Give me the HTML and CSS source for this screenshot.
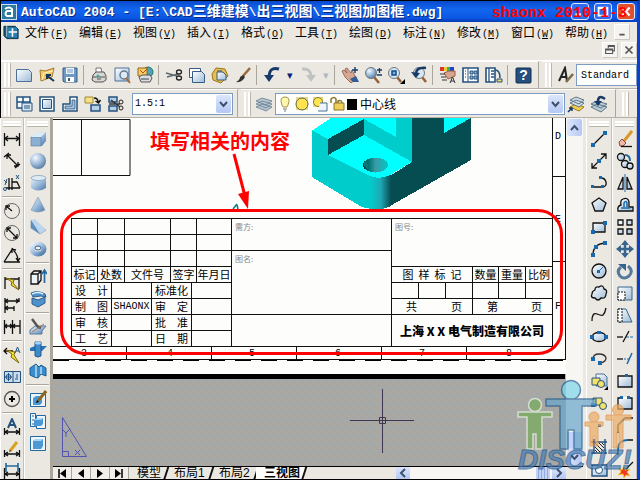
FILE: index.html
```html
<!DOCTYPE html>
<html lang="zh-CN">
<head>
<meta charset="utf-8">
<title>AutoCAD 2004</title>
<link rel="stylesheet" href="styles.css">
</head>
<body>
<svg class="defs" aria-hidden="true">
  <defs>
    <linearGradient id="pale" x1="0" y1="0" x2="1" y2="1"><stop offset="0" stop-color="#fff"/><stop offset="1" stop-color="#9dbbd8"/></linearGradient>
    <linearGradient id="steel" x1="0" y1="0" x2="1" y2="1"><stop offset="0" stop-color="#e6f1fa"/><stop offset=".5" stop-color="#9dbcdc"/><stop offset="1" stop-color="#4a78a8"/></linearGradient>
    <radialGradient id="ball" cx=".35" cy=".3" r=".8"><stop offset="0" stop-color="#f4faff"/><stop offset=".5" stop-color="#9dbad8"/><stop offset="1" stop-color="#4b7097"/></radialGradient>
    <linearGradient id="corner"><stop offset="0" stop-color="#00cccc"/><stop offset=".5" stop-color="#1fa9b4"/><stop offset="1" stop-color="#064c50"/></linearGradient>
    <linearGradient id="bore"><stop offset="0" stop-color="#033"/><stop offset=".25" stop-color="#077"/><stop offset=".5" stop-color="#3c9aa6"/><stop offset="1" stop-color="#00c8c8"/></linearGradient>
    <pattern id="grain" width="8" height="8" patternUnits="userSpaceOnUse"><rect width="8" height="8" fill="#a6a9a6"/><path fill="#b99a80" d="M1 1h1v1h-1zM5 3h1v1h-1zM2 6h1v1h-1z"/><path fill="#98a4b3" d="M3 3h1v1h-1zM7 6h1v1h-1zM6 0h1v1h-1z"/></pattern>
  </defs>
</svg>

<div class="window">
  <header class="titlebar">
    <svg class="app-logo" viewBox="0 0 16 16"><rect width="16" height="16" fill="#cfe3ee"/><rect x="1" y="1" width="14" height="14" fill="#2d7a9c"/><path d="M4 5q4-3 7 0v7H6q-3-2 0-5h5" fill="none" stroke="#fff" stroke-width="2"/></svg>
    <h1 class="caption"><span class="mono">AutoCAD 2004 - [E:\CAD</span>三维建模<span class="mono">\</span>出三视图<span class="mono">\</span>三视图加图框<span class="mono">.dwg]</span></h1>
    <div class="sys">
      <button aria-label="最小化"><svg viewBox="0 0 18 17"><path d="M4 12h6" stroke="#fff" stroke-width="3"/></svg></button>
      <button aria-label="还原"><svg viewBox="0 0 18 17"><path d="M4 4h10v9H4zM4 5h10" fill="none" stroke="#fff" stroke-width="2"/></svg></button>
      <button class="close" aria-label="关闭"><svg viewBox="0 0 18 17"><path d="M5 4l8 9M13 4l-8 9" stroke="#fff" stroke-width="2.4"/></svg></button>
    </div>
  </header>

  <div class="menubar">
    <nav class="menus">
      <svg class="doc-icon" viewBox="0 0 18 16"><path d="M1 2h12l3 3v10H4l-3-3z" fill="#175a7c" stroke="#082d44"/><path d="M4 1v12" stroke="#cde" /><rect x="5" y="3" width="10" height="11" fill="#2b7fae"/><path d="M10 4v9M6 8h9" stroke="#fff" stroke-width="1.6"/></svg>
      <button>文件<span class="key">(<u>F</u>)</span></button>
      <button>编辑<span class="key">(<u>E</u>)</span></button>
      <button>视图<span class="key">(<u>V</u>)</span></button>
      <button>插入<span class="key">(<u>I</u>)</span></button>
      <button>格式<span class="key">(<u>O</u>)</span></button>
      <button>工具<span class="key">(<u>T</u>)</span></button>
      <button>绘图<span class="key">(<u>D</u>)</span></button>
      <button>标注<span class="key">(<u>N</u>)</span></button>
      <button>修改<span class="key">(<u>M</u>)</span></button>
      <button>窗口<span class="key">(<u>W</u>)</span></button>
      <button class="last">帮助<span class="key">(<u>H</u>)</span></button>
      <span class="doc-sys min"><button aria-label="最小化文档"><svg viewBox="0 0 16 16"><path d="M5 11h6" stroke="#555" stroke-width="2"/></svg></button></span>
    </nav>
    <div class="doc-sys">
      <button aria-label="还原文档"><svg viewBox="0 0 16 16"><path d="M6 6V3h7v6h-2M3 7h8v5H3zM6 4h7M3 8h8" fill="none" stroke="#555" stroke-width="1.2"/></svg></button>
      <button aria-label="关闭文档"><svg viewBox="0 0 16 16"><path d="M4 4l8 8M12 4l-8 8" stroke="#555" stroke-width="2"/></svg></button>
    </div>
  </div>

  <div class="row">
    <div class="toolbar">
      <i class="grip"></i>
      <button class="tool" aria-label="新建"><svg viewBox="0 0 18 18"><path d="M1.500 3.500h12l3 3v9h-15z" fill="url(#pale)" stroke="#4c7199"/></svg></button>
      <button class="tool" aria-label="打开"><svg viewBox="0 0 18 18"><path d="M2 4l5 1 9-3-2 9-11 4z" fill="#f0c96c" stroke="#a87b28"/><path d="M4 14l2-7 9-2" fill="none" stroke="#fff2c0"/><path d="M8 9l8 6M9 13V9h4" stroke="#16365a" stroke-width="2" fill="none"/></svg></button>
      <button class="tool" aria-label="保存"><svg viewBox="0 0 18 18"><path d="M2 2h14v14H3l-1-1z" fill="#6f99c2" stroke="#365c86"/><path d="M5 2h8v6H5z" fill="#eef5fb"/><path d="M6 4h6M6 6h6" stroke="#6f99c2"/><path d="M5 11h8v5H5z" fill="#fff"/><path d="M7 12h2v3H7z" fill="#365c86"/></svg></button>
      <i class="sep"></i>
      <button class="tool" aria-label="打印"><svg viewBox="0 0 18 18"><path d="M6 7V2h5l1 5" fill="#fff" stroke="#777"/><path d="M3 9l3-3h8l2 4v4l-3 2H5l-3-2z" fill="#d6d6d2" stroke="#555"/><path d="M3 11h12M7 13h4" stroke="#555"/><circle cx="8" cy="10" r="1.500" fill="#4a9"/></svg></button>
      <button class="tool" aria-label="打印预览"><svg viewBox="0 0 18 18"><path d="M2 2h14v13H2z" fill="url(#pale)" stroke="#4c7199"/><circle cx="11" cy="9" r="4" fill="#dceaf5" stroke="#657b91" stroke-width="1.500"/><path d="M13 12l4 5" stroke="#a56a38" stroke-width="2"/></svg></button>
      <button class="tool" aria-label="发布"><svg viewBox="0 0 18 18"><circle cx="12" cy="6" r="5" fill="#4fa3b8" stroke="#276"/><path d="M2 2h9v8H2z" fill="#f5d05e" stroke="#94641b"/><path d="M4 4l3 3 4-4" stroke="#b43" fill="none"/><path d="M3 11l3-2h8l2 3-2 4H5z" fill="#ddd" stroke="#555"/><path d="M5 13h8" stroke="#345"/></svg></button>
      <i class="sep"></i>
      <button class="tool" aria-label="剪切"><svg viewBox="0 0 18 18"><path d="M1 7l11 3M2 11l11-3" stroke="#5d6a72" stroke-width="1.500"/><ellipse cx="14" cy="6" rx="2.500" ry="2" fill="none" stroke="#222" stroke-width="1.300"/><ellipse cx="14" cy="12" rx="2.500" ry="2" fill="none" stroke="#222" stroke-width="1.300"/></svg></button>
      <button class="tool" aria-label="复制"><svg viewBox="0 0 18 18"><path d="M1.500 2.500h11v9h-11z" fill="#fff" stroke="#365c86"/><path d="M4.500 5.500h9l3 3v8h-12z" fill="url(#pale)" stroke="#365c86"/></svg></button>
      <button class="tool" aria-label="粘贴"><svg viewBox="0 0 18 18"><path d="M5 2l9 1 3 7-7 7-8-3-1-6z" fill="#e8bf48" stroke="#9c7421"/><path d="M6 4h5v2H6z" fill="#888"/><path d="M6 6h6l3 3v5H6z" fill="url(#pale)" stroke="#365c86"/></svg></button>
      <button class="tool" aria-label="特性匹配"><svg viewBox="0 0 18 18"><path d="M16 2l-7 8" stroke="#9b6a3b" stroke-width="2.500"/><path d="M9 9l2 2q-3 6-9 5 4-2 4-5z" fill="#33332f"/></svg></button>
      <i class="sep"></i>
      <button class="tool" aria-label="放弃"><svg viewBox="0 0 18 18"><path d="M16 3Q6 0 6 12" fill="none" stroke="#173a68" stroke-width="3"/><path d="M1 9h10l-5 7z" fill="#173a68"/></svg></button>
      <button class="drop" aria-label="放弃列表">▾</button>
      <button class="tool" aria-label="重做"><svg viewBox="0 0 18 18"><path d="M3 3q9-1 9 8" fill="none" stroke="#bfc2c1" stroke-width="3"/><path d="M7 9h10l-5 7z" fill="#bfc2c1"/></svg></button>
      <button class="drop off" aria-label="重做列表">▾</button>
      <i class="sep"></i>
      <button class="tool" aria-label="平移"><svg viewBox="0 0 18 18"><path d="M1 5l2-1 3 3-2-4 2-1 4 5 1-3 3 6v4l-4 3-6-6z" fill="#d4a792" stroke="#8d5848" stroke-width=".8"/><path d="M9 13l6-3 3 6h-6z" fill="#315e92"/><path d="M14 1v6M11 4h6" stroke="#173a68" stroke-width="1.400"/></svg></button>
      <button class="tool" aria-label="实时缩放"><svg viewBox="0 0 18 18"><path d="M10 11l5 6" stroke="#965f35" stroke-width="2.500"/><circle cx="7" cy="7" r="5.500" fill="url(#ball)" stroke="#6c7880"/><path d="M13 4h5M15.500 2v5M13 9h5" stroke="#173a68" stroke-width="1.300"/></svg></button>
      <button class="tool" aria-label="窗口缩放"><svg viewBox="0 0 18 18"><path d="M10 11l4 5" stroke="#965f35" stroke-width="2.500"/><circle cx="7" cy="7" r="5.500" fill="#d8e6f0" stroke="#6c7880"/><path d="M5 5h4v4H5z" fill="#7fb0dc" stroke="#124e8c" stroke-width="1.500"/><path d="M18 13v5h-5z"/></svg></button>
      <button class="tool" aria-label="缩放上一个"><svg viewBox="0 0 18 18"><path d="M12 11l4 5" stroke="#965f35" stroke-width="2.500"/><circle cx="9" cy="7" r="5.500" fill="#d8e6f0" stroke="#6c7880"/><path d="M16 2Q7 1 6 7" fill="none" stroke="#173a68" stroke-width="2.500"/><path d="M1 6l9 1-4 5z" fill="#173a68"/></svg></button>
      <i class="sep"></i>
      <button class="tool" aria-label="特性"><svg viewBox="0 0 18 18"><path d="M1 1h4v4H1z" fill="#d33"/><path d="M5 1h3v4H5z" fill="#ec3"/><path d="M8 1h3v4H8z" fill="#3b4"/><path d="M11 1h4v4h-4z" fill="#24c"/><path d="M5 7l5-2h6v5l-7 3z" fill="#d9a590" stroke="#995b48"/><path d="M1 8h5M2 11h5M3 14h5" stroke="#333"/><path d="M11 17l2.500-6 2.500 6M12 15h3" stroke="#333" fill="none"/></svg></button>
      <button class="tool" aria-label="设计中心"><svg viewBox="0 0 18 18"><path d="M1 2h15v14H1z" fill="#fff" stroke="#24527f" stroke-width="1.600"/><path d="M6 2v14" stroke="#24527f"/><path d="M3 5h1M3 8h1M3 11h1M8 5h3v3H8zM12 5h3v3h-3zM8 10h3v3H8zM12 10h3v3h-3z" fill="#8db2d4" stroke="#24527f"/></svg></button>
      <button class="tool" aria-label="工具选项板"><svg viewBox="0 0 18 18"><path d="M1 2h9v14H1z" fill="#fff" stroke="#24527f" stroke-width="1.600"/><path d="M4 2v14M6 5h3M6 8h3M6 11h3" stroke="#24527f" stroke-width="1.300"/><path d="M10 4q5 0 5 8" fill="none" stroke="#24527f" stroke-width="1.600"/><path d="M12 13h5v3h-5z" fill="#f3d36a" stroke="#24527f"/></svg></button>
      <i class="sep"></i>
      <button class="tool" aria-label="帮助"><svg viewBox="0 0 18 18"><rect x="2" y="2" width="15" height="15" rx="1" fill="#244f80" stroke="#10304f"/><text x="9.500" y="14" text-anchor="middle" class="q">?</text></svg></button>
    </div>
    <div class="toolbar rest">
      <i class="grip"></i>
      <button class="tool" aria-label="文字样式"><svg viewBox="0 0 18 18"><path d="M3 15L9 2l2 13M5 11h6" fill="none" stroke="#222" stroke-width="2"/><path d="M17 8l-7 8" stroke="#7a6a45" stroke-width="2.500"/></svg></button>
      <input class="style-box" aria-label="文字样式名" value="Standard">
    </div>
  </div>

  <div class="row second">
    <div class="toolbar">
      <i class="grip"></i>
      <button class="tool" aria-label="显示视口对话框"><svg viewBox="0 0 18 18"><path d="M2 2h13v11H2zM8 2v11M2 7h13" fill="#f8fbfe" stroke="#24527f" stroke-width="1.500"/><path d="M7 8h10v8H7z" fill="#dbe8f4" stroke="#24527f"/><path d="M9 11h6M9 13h6" stroke="#24527f"/></svg></button>
      <button class="tool" aria-label="单个视口"><svg viewBox="0 0 18 18"><path d="M2 2h14v14H2z" fill="#fff" stroke="#24527f" stroke-width="1.500"/><path d="M4.500 4.500h9v9h-9z" fill="url(#pale)" stroke="#24527f"/></svg></button>
      <button class="tool" aria-label="多边形视口"><svg viewBox="0 0 18 18"><path d="M9 2h7v14H2V9h7z" fill="#fff" stroke="#24527f" stroke-width="1.500"/><path d="M11 5h3v9H4v-3h7z" fill="#9fbfdd" stroke="#24527f" stroke-width=".8"/></svg></button>
      <button class="tool" aria-label="将对象转换为视口"><svg viewBox="0 0 18 18"><path d="M1 2h8v6H1z" fill="#f4e08a" stroke="#a28a2d"/><path d="M10 3q4 0 4 4M11.500 6l3 2 2-3" fill="none" stroke="#111" stroke-width="1.500"/><path d="M7 10h9v6H7z" fill="#b7d0e6" stroke="#24527f" stroke-width="1.500"/></svg></button>
      <button class="tool" aria-label="剪裁现有视口"><svg viewBox="0 0 18 18"><path d="M2 2h8v5H2zM2 11h8v5H2z" fill="#b7d0e6" stroke="#24527f" stroke-width="1.500"/><path d="M2 9h11M4 5l9 7" stroke="#333" stroke-width="1.500"/><circle cx="14" cy="7" r="2" fill="none" stroke="#222"/><circle cx="14" cy="13" r="2" fill="none" stroke="#222"/></svg></button>
      <div class="combo scale">
        <select aria-label="视口比例"><option>1.5:1</option></select>
        <svg class="chev" viewBox="0 0 15 18"><path d="M4 7l3.500 4L11 7" fill="none" stroke="#40506f" stroke-width="2"/></svg>
      </div>
    </div>
    <div class="toolbar layers">
      <i class="grip"></i>
      <button class="tool" aria-label="图层特性管理器"><svg viewBox="0 0 18 18"><path d="M1 12l6-3 10 3-6 4zM1 9l6-3 10 3-6 4zM1 6l6-3 10 3-6 4z" fill="#b5c6d2" stroke="#667b8c" stroke-width=".8"/></svg></button>
      <div class="combo layer">
        <svg class="states" viewBox="0 0 80 18"><path d="M5 10q-3-8 3-8t3 8l-1 2H6z" fill="#fff7b0" stroke="#a2924a"/><path d="M6 14h4M7 16h2" stroke="#777"/><path d="M19 2h12v13H19z" fill="#e9d88c"/><circle cx="25" cy="9" r="6" fill="#ffe34f" stroke="#596b55"/><path d="M36 2h10v10H36z" fill="#ead875"/><circle cx="41" cy="7" r="4.500" fill="#ffe34f" stroke="#827b3f"/><path d="M43 8h7v8h-9" fill="#edf4fb" stroke="#4e7092"/><path d="M54 8V4q3-3 5 0v4M61 9V6q4-2 4 3" fill="none" stroke="#8b762a" stroke-width="1.500"/><path d="M57 8h10v7H57z" fill="#f0cf58" stroke="#8b762a"/><path d="M70 4h10v11H70z"/></svg>
        <select aria-label="图层"><option>中心线</option></select>
        <svg class="chev" viewBox="0 0 15 18"><path d="M4 7l3.500 4L11 7" fill="none" stroke="#40506f" stroke-width="2"/></svg>
      </div>
      <button class="tool" aria-label="将对象的图层置为当前"><svg viewBox="0 0 18 18"><path d="M3 12l6-3 8 3-5 4z" fill="#f1cf4c" stroke="#9b7d21"/><path d="M3 8l6-3 8 3-5 4zM3 5l6-3 8 3-5 4z" fill="#d3dfe6" stroke="#5c7584"/><path d="M1 17l4-4M2 13h3v3" stroke="#173a68" stroke-width="1.500" fill="none"/></svg></button>
      <button class="tool" aria-label="上一个图层"><svg viewBox="0 0 18 18"><path d="M1 12l6-3 10 3-6 5zM1 9l6-3 10 3-6 4z" fill="#bccdd8" stroke="#5c7584"/><path d="M15 4Q8-1 8 7" fill="none" stroke="#173a68" stroke-width="2.500"/><path d="M4 6h8l-4 5z" fill="#173a68"/></svg></button>
    </div>
    <div class="toolbar rest"><i class="grip"></i></div>
  </div>

  <main class="work">
    <div class="dock dims">
      <i class="grip"></i>
      <button class="tool" aria-label="线性标注"><svg viewBox="0 0 18 18"><path d="M1.500 3v13M16.500 3v13M2 8.500h14M5 6l-3 2.500L5 11M13 6l3 2.500-3 2.500" class="ln"/></svg></button>
      <button class="tool" aria-label="对齐标注"><svg viewBox="0 0 18 18"><path d="M1 5l5-4M12 16l5-4M4 3l11 11M4 7V3h4M15 10v4h-4" class="ln"/></svg></button>
      <button class="tool" aria-label="坐标标注"><svg viewBox="0 0 18 18"><path d="M6 4v12M9 4v12M3 14h14M9 8h5l3 6" class="ln"/><path d="M1 6l3 3M4 5l-2 6M13 1l3 4M16 1l-3 4" stroke="#24527f"/><circle cx="2" cy="15" r="1.500" fill="none" stroke="#24527f"/></svg></button>
      <i class="sep"></i>
      <button class="tool" aria-label="半径标注"><svg viewBox="0 0 18 18"><circle cx="9" cy="9" r="7.500" fill="none" stroke="#666"/><path d="M3 4l6 5M3 8V4h4" class="ln"/></svg></button>
      <button class="tool" aria-label="直径标注"><svg viewBox="0 0 18 18"><circle cx="9" cy="9" r="7.500" fill="none" stroke="#666"/><path d="M4 4l10 10M4 8V4h4M14 10v4h-4" class="ln"/></svg></button>
      <button class="tool" aria-label="角度标注"><svg viewBox="0 0 18 18"><path d="M1 16h16M1 16L10 2M10 4q5 4 5 11M9 7V3l4 1M13 12l2 3 2-3" class="ln"/></svg></button>
      <i class="sep"></i>
      <button class="tool" aria-label="快速标注"><svg viewBox="0 0 18 18"><path d="M2 3v12M16 3v12M2 5h14" class="ln"/><path d="M3 4l8 2-1 3 6 7-8-5 1-3z" fill="#f2dd30" stroke="#7b6810"/></svg></button>
      <button class="tool" aria-label="基线标注"><svg viewBox="0 0 18 18"><path d="M2 2v15M16 2v4M11 10v5M2 5h14M2 12h9M5 3L2 5l3 2M5 10l-3 2 3 2M13 3l3 2-3 2" class="ln"/></svg></button>
      <button class="tool" aria-label="连续标注"><svg viewBox="0 0 18 18"><path d="M1.500 2v14M9.500 2v14M17 2v14M2 8h15M4 6L2 8l2 2M7 6l2 2-2 2M12 6l-2 2 2 2" class="ln"/></svg></button>
      <i class="sep"></i>
      <button class="tool" aria-label="快速引线"><svg viewBox="0 0 18 18"><path d="M1 5h9M4 2L1 5l3 3" class="ln"/><path d="M3 4l9 2-1 3 5 8-8-6 1-3z" fill="#f2dd30" stroke="#7b6810"/><path d="M12 7l2.500-6L17 7M13 5h3" stroke="#24527f" fill="none"/></svg></button>
      <button class="tool" aria-label="公差"><svg viewBox="0 0 18 18"><path d="M1.500 3.500h16v11h-16zM10 3v11" fill="#c8dcec" stroke="#24527f"/><circle cx="5.500" cy="9" r="2.500" fill="none" stroke="#24527f"/><path d="M5.500 5v8M2 9h7M14 6v6M12 11h1" stroke="#24527f"/></svg></button>
      <button class="tool" aria-label="圆心标记"><svg viewBox="0 0 18 18"><circle cx="9" cy="9" r="7.500" fill="none" stroke="#555" stroke-width="1.300"/><path d="M9 6v6M6 9h6" stroke="#000" stroke-width="2"/></svg></button>
      <i class="sep"></i>
      <button class="tool" aria-label="编辑标注"><svg viewBox="0 0 18 18"><path d="M5 10l4-9 4 9M6 7h6" fill="none" stroke="#24527f" stroke-width="2"/><path d="M1.500 10v7M16.500 10v7M2 14h14M5 12l-3 2 3 2M13 12l3 2-3 2" class="ln"/></svg></button>
      <button class="tool" aria-label="编辑标注文字"><svg viewBox="0 0 18 18"><path d="M14 2L7 11" stroke="#d8a321" stroke-width="3"/><path d="M6 12l1-2 1 1z"/><path d="M1.500 10v7M16.500 10v7M2 14h14M5 12l-3 2 3 2M13 12l3 2-3 2" class="ln"/></svg></button>
      <button class="tool" aria-label="标注更新"><svg viewBox="0 0 18 18"><path d="M3 1v9M15 1v9M3 4h12" stroke="#24699f" stroke-width="1.600"/><path d="M1.500 6v11M16.500 6v11M2 12h14M5 10l-3 2 3 2M13 10l3 2-3 2" class="ln"/></svg></button>
    </div>
    <div class="dock solids">
      <i class="grip"></i>
      <button class="tool" aria-label="长方体"><svg viewBox="0 0 18 18"><path d="M2 7l4-4 11-1v9l-4 5H2z" fill="url(#steel)"/><path d="M2 7h10v9H2z" fill="#8aafd2" stroke="#54789e" stroke-width=".6"/><path d="M2 7l4-4 11-1-5 5z" fill="#dcebf8"/></svg></button>
      <button class="tool" aria-label="球体"><svg viewBox="0 0 18 18"><circle cx="9" cy="9" r="8" fill="url(#ball)"/></svg></button>
      <button class="tool" aria-label="圆柱体"><svg viewBox="0 0 18 18"><path d="M2 4v10q7 5 15 0V4z" fill="url(#steel)"/><ellipse cx="9.500" cy="4" rx="7.500" ry="2.500" fill="#dfeaf3" stroke="#7a98b4" stroke-width=".7"/></svg></button>
      <button class="tool" aria-label="圆锥体"><svg viewBox="0 0 18 18"><path d="M9 1L2 14q7 4 14 0z" fill="url(#steel)" stroke="#7b97b0" stroke-width=".6"/></svg></button>
      <button class="tool" aria-label="楔体"><svg viewBox="0 0 18 18"><path d="M2 2v8l9 6 6-4z" fill="#5f8fbe" stroke="#5e83a8" stroke-width=".6"/><path d="M2 2l4-1 11 11-6 4z" fill="#bed6ec"/></svg></button>
      <button class="tool" aria-label="圆环"><svg viewBox="0 0 18 18"><ellipse cx="9" cy="9" rx="6" ry="5" fill="none" stroke="url(#steel)" stroke-width="5"/><ellipse cx="9" cy="8" rx="3" ry="2" fill="#e9f0f5" stroke="#355f88"/></svg></button>
      <i class="sep"></i>
      <button class="tool" aria-label="拉伸"><svg viewBox="0 0 18 18"><path d="M2 6l3-3h7v9l-3 4H2zM2 6h7v10M9 6l3-3" fill="#edf2f5" stroke="#111" stroke-width="1.300"/><path d="M15.500 15V3M13 6l2.500-4L18 6" stroke="#24699f" stroke-width="1.700" fill="none"/></svg></button>
      <button class="tool" aria-label="旋转"><svg viewBox="0 0 18 18"><path d="M2 3q7-3 14 1l1 3-5-1-8 1zM3 8l6 2 7-3v6l-7 4-6-3z" fill="#4f91cb" stroke="#2d5f91"/><path d="M3 4q6-3 11 0" stroke="#d9efff" stroke-width="1.500" fill="none"/></svg></button>
      <i class="sep"></i>
      <button class="tool" aria-label="剖切"><svg viewBox="0 0 18 18"><path d="M1 12l5-4h11l-4 5v3H1z" fill="url(#steel)" stroke="#5b7b99"/><path d="M3 1l6 8 3 1" stroke="#555" stroke-width="2.500" fill="none"/><path d="M3 14l12-8" stroke="#a67b48"/></svg></button>
      <button class="tool" aria-label="切割"><svg viewBox="0 0 18 18"><path d="M1 8l5-2h12l-5 5H1z" fill="#2773b5"/><path d="M6 2h6v14q-3 2-6 0z" fill="#3c8bcb" stroke="#245b8c"/><ellipse cx="9" cy="3" rx="3" ry="1.500" fill="#a5d1f2"/></svg></button>
      <button class="tool" aria-label="干涉"><svg viewBox="0 0 18 18"><path d="M1 6l6-4 3 3 2-2 5 3v8l-5-2-3 4-4-1-4-2z" fill="#3a8ccd" stroke="#245b8c"/><path d="M7 3v12M12 5v7" stroke="#b3dcf6" stroke-width="1.500"/></svg></button>
      <i class="sep"></i>
      <button class="tool" aria-label="设置图形"><svg viewBox="0 0 18 18"><path d="M1.500 3.500h15v13h-15z" fill="#edf4fa" stroke="#24699f"/><path d="M4 8l3-2h6v7l-2 2H4z" fill="#4b98d5"/><path d="M17 1L9 11" stroke="#8c6823" stroke-width="3"/><path d="M7 13l1-3 2 2z"/></svg></button>
      <button class="tool" aria-label="设置视图"><svg viewBox="0 0 18 18"><path d="M1.500 1.500h5v13h-5zM7.500 3.500h9v13h-9z" fill="#edf4fa" stroke="#24699f"/><path d="M3 4h2M3 8h2M3 12h2" stroke="#24699f"/><path d="M5 8l3-2h6v6l-2 2H5z" fill="#4b98d5"/><path d="M5 8l3-2h6l-2 2z" fill="#a7d4f5"/></svg></button>
      <button class="tool" aria-label="设置轮廓"><svg viewBox="0 0 18 18"><path d="M1.500 2.500h15v14h-15z" fill="#edf4fa" stroke="#24699f"/><path d="M4 7l3-2h7v7l-2 3H4z" fill="#4b98d5"/><path d="M4 7l3-2h7l-2 2z" fill="#a7d4f5"/></svg></button>
    </div>

    <section class="view">
      <div class="canvas">
        <svg class="sheet" viewBox="0 0 513 348">
          <rect width="513" height="256" fill="#fdfdfb"/>
          <rect y="256" width="512" height="5"/>
          <rect y="261" width="512" height="87" fill="url(#grain)"/>
          <path d="M512.500 256v92" stroke="#32e6ec"/>
          <path class="line" d="M0 1.500h77v56H0M28.500 1v57M499.500 0v229M512.500 0v242M499 58.500h13M499 143.500h13M0 228.500h500M73.500 228v13M158.500 228v13M243.500 228v13M328.500 228v13M413.500 228v13M0 241.500h512"/>
          <path d="M0 242.500h512" stroke="#000" stroke-dasharray="16 10"/>
          <g class="zone"><text x="31" y="238">3</text><text x="117" y="238">4</text><text x="199" y="238">5</text><text x="285" y="238">6</text><text x="369" y="238">7</text><text x="456" y="238">8</text><text x="505" y="21">D</text><text x="505" y="104">E</text><text x="505" y="191">F</text></g>
          <g transform="translate(-53 -118)" shape-rendering="crispEdges">
            <path fill="#00cccc" d="M312 130l16 9v16l42 21q7 4 21-1v31q-12 6-29 1l-50-30z"/>
            <path fill="#0ff" d="M312 130.500l19-12.500h33v1l-36 20zM364 135l48 27-25 15q-9 3-17-1l-42-21z"/>
            <path fill="#054d50" d="M364 119v16l-36 20v-16zM412 118h59v42l-81 46v-30l22-14z"/>
            <path fill="#00cccc" d="M364 118h48v44l-48-27z"/>
            <path fill="#0ff" d="M364 118h32v19l-32-18zM444 118h27l-27 15z"/>
            <path fill="url(#corner)" d="M370 176q9 4 21-1v31q-11 5-21 2z"/>
            <ellipse cx="375.500" cy="165" rx="12.500" ry="7.500" fill="url(#bore)"/>
            <path fill="#0a7777" d="M364 162q-2 4 4 7l-1-10z"/>
          </g>
          <g fill="none" stroke="#5553ae"><path d="M9.500 299.500l24 39h-24zM9.500 333.500h6v5M10 312l3 3 4-4M13 315v4M22 332l5 5M27 332l-5 5"/></g>
          <path d="M297 302.500h64M329.500 271v64M326.500 299.500h6v6h-6z" fill="none" stroke="#40354f"/>
        </svg>

        <div class="title-block">
          <div class="part revisions">
            <div class="cells c5">
              <b></b><b></b><b></b><b></b><b></b>
              <b></b><b></b><b></b><b></b><b></b>
              <b></b><b></b><b></b><b></b><b></b>
              <b>标记</b><b>处数</b><b>文件号</b><b>签字</b><b>年月日</b>
            </div>
            <div class="cells c4">
              <b>设　计</b><b></b><b>标准化</b><b></b>
              <b>制　图</b><b class="cad">SHAONX</b><b>审　定</b><b></b>
              <b>审　核</b><b></b><b>批　准</b><b></b>
              <b>工　艺</b><b></b><b>日　期</b><b></b>
            </div>
          </div>
          <div class="part names">
            <b class="note">需方:</b><b class="note">图名:</b><b></b>
          </div>
          <div class="part number">
            <b class="note">图号:</b>
            <div class="cells heads"><b>图&nbsp; 样&nbsp; 标&nbsp; 记</b><b>数量</b><b>重量</b><b>比例</b></div>
            <div class="cells c6"><b></b><b></b><b></b><b></b><b></b><b></b></div>
            <div class="cells pages"><b><span>共</span><span>页</span></b><b><span>第</span><span>页</span></b></div>
            <b class="company">上海 X X 电气制造有限公司</b>
          </div>
        </div>

        <div class="ring"></div>
        <svg class="arrow" viewBox="0 0 30 62"><path d="M3 2l12 46" stroke="#f00" stroke-width="3"/><path d="M7 42l11-3-1 18z" fill="#f00"/><path d="M2 57l4-5M7 57l-1-4" stroke="#127788" stroke-width="1.500"/></svg>
        <p class="callout">填写相关的内容</p>
      </div>
      <div class="vscroll">
        <button aria-label="向上滚动"><svg viewBox="0 0 15 16"><path d="M4 10l3.500-4L11 10" fill="none" stroke="#40506f" stroke-width="2"/></svg></button>
        <span class="vtrack"><i class="vthumb"></i></span>
        <button aria-label="向下滚动"><svg viewBox="0 0 15 16"><path d="M4 6l3.500 4L11 6" fill="none" stroke="#40506f" stroke-width="2"/></svg></button>
      </div>
      <div class="foot">
        <button class="nav" aria-label="第一个"><svg viewBox="0 0 18 12"><path d="M6 2v9" stroke="#000" stroke-width="1.500"/><path d="M13 2v9L7 6.500z"/></svg></button>
        <button class="nav" aria-label="上一个"><svg viewBox="0 0 18 12"><path d="M12 2v9L6 6.500z"/></svg></button>
        <button class="nav" aria-label="下一个"><svg viewBox="0 0 18 12"><path d="M6 2v9l6-4.500z"/></svg></button>
        <button class="nav" aria-label="最后一个"><svg viewBox="0 0 18 12"><path d="M12 2v9" stroke="#000" stroke-width="1.500"/><path d="M5 2v9l6-4.500z"/></svg></button>
        <button class="tab">模型</button>
        <button class="tab wide">布局1</button>
        <button class="tab wide">布局2</button>
        <button class="tab wide on">三视图</button>
        <div class="hscroll">
          <button aria-label="向左滚动"><svg viewBox="0 0 14 12"><path d="M9 2L5 6l4 4" fill="none" stroke="#40506f" stroke-width="2"/></svg></button>
          <span class="htrack"><i class="hthumb"></i></span>
          <button aria-label="向右滚动"><svg viewBox="0 0 14 12"><path d="M5 2l4 4-4 4" fill="none" stroke="#40506f" stroke-width="2"/></svg></button>
        </div>
      </div>
    </section>

    <div class="dock draw">
      <i class="grip"></i>
      <button class="tool" aria-label="直线"><svg viewBox="0 0 18 18"><path d="M3 15L15 3" class="ln"/><path d="M1 13h4v4H1zM13 1h4v4h-4z" class="pt"/></svg></button>
      <button class="tool" aria-label="构造线"><svg viewBox="0 0 18 18"><path d="M2 16L16 2M2 11v5h5M11 2h5v5" class="ln"/><path d="M7 7h4v4H7z" class="pt"/></svg></button>
      <button class="tool" aria-label="多段线"><svg viewBox="0 0 18 18"><path d="M3 13h10q4-1 3-5-1-4-5-4" class="ln"/><path d="M1 11h3v3H1zM11 11h3v3h-3zM9 2h3v3H9z" class="pt"/></svg></button>
      <button class="tool" aria-label="正多边形"><svg viewBox="0 0 18 18"><path d="M9 2l7 5-3 8H5L2 7z" fill="url(#pale)" stroke="#111" stroke-width="1.300"/></svg></button>
      <button class="tool" aria-label="矩形"><svg viewBox="0 0 18 18"><path d="M3 5h12v9H3z" fill="url(#pale)" stroke="#111" stroke-width="1.300"/><path d="M1 12h4v4H1zM13 3h4v4h-4z" class="pt"/></svg></button>
      <button class="tool" aria-label="圆弧"><svg viewBox="0 0 18 18"><path d="M3 15Q3 4 15 3" class="ln"/><path d="M1 13h4v4H1zM4 5h4v4H4zM13 1h4v4h-4z" class="pt"/></svg></button>
      <button class="tool" aria-label="圆"><svg viewBox="0 0 18 18"><circle cx="9" cy="9" r="7" fill="url(#pale)" stroke="#111" stroke-width="1.300"/><path d="M9 9l4-4" stroke="#1768ac"/><path d="M7 8h3v3H7z" class="pt"/></svg></button>
      <button class="tool" aria-label="修订云线"><svg viewBox="0 0 18 18"><path d="M5 6q0-4 4-3 4-3 5 2 4 1 2 5 0 5-5 4-3 4-6 0-5 0-3-4 0-3 3-4z" fill="url(#pale)" stroke="#111" stroke-width="1.300"/></svg></button>
      <button class="tool" aria-label="样条曲线"><svg viewBox="0 0 18 18"><path d="M2 15Q2 6 7 8t6 1q2-2 3-7" class="ln"/></svg></button>
      <button class="tool" aria-label="椭圆"><svg viewBox="0 0 18 18"><ellipse cx="9" cy="9" rx="7" ry="4.500" fill="url(#pale)" stroke="#111" stroke-width="1.300"/><path d="M0 7h4v4H0zM14 7h4v4h-4zM7 3h4v3H7z" class="pt"/></svg></button>
      <button class="tool" aria-label="椭圆弧"><svg viewBox="0 0 18 18"><path d="M3 9q0-5 6-5t7 4q0 4-6 5" fill="none" stroke="#333" stroke-width="1.300"/><path d="M1 7h4v4H1zM8 11h4v4H8z" class="pt"/></svg></button>
      <button class="tool" aria-label="插入块"><svg viewBox="0 0 18 18"><path d="M6 2h8l3 3v9H6z" fill="url(#pale)" stroke="#4c7199"/><path d="M2 6h8v7H2z" fill="#f4e26a" stroke="#24527f"/><circle cx="11" cy="12" r="3.500" fill="#f4e26a" stroke="#24527f"/><path d="M18 14v4h-4z"/></svg></button>
      <button class="tool" aria-label="创建块"><svg viewBox="0 0 18 18"><path d="M3 4h9v7H3z" fill="#f4e26a" stroke="#24527f"/><circle cx="13" cy="12" r="3.500" fill="#f4e26a" stroke="#24527f"/><path d="M1 9h4v4H1z" class="pt"/></svg></button>
      <button class="tool" aria-label="点"><svg viewBox="0 0 18 18"><path d="M8 8h3v3H8z" class="pt"/></svg></button>
      <button class="tool" aria-label="图案填充"><svg viewBox="0 0 18 18"><path d="M4 1v15M15 1v15M1 4h16M1 15h16" stroke="#24527f" stroke-width="1.400"/><path d="M5 5l9 9M9 5l5 5M5 9l5 5M12 5l2 2M5 12l2 2" stroke="#222"/></svg></button>
      <button class="tool" aria-label="面域"><svg viewBox="0 0 18 18"><path d="M2 5h15v11H2z" fill="url(#pale)" stroke="#24527f" stroke-width="1.400"/><circle cx="9" cy="10" r="3.500" fill="#fff" stroke="#24527f"/></svg></button>
    </div>
    <div class="dock modify">
      <i class="grip"></i>
      <button class="tool" aria-label="删除"><svg viewBox="0 0 18 18"><path d="M16 1L8 11" stroke="#d9962b" stroke-width="3"/><path d="M3 12l3-3 4 4-3 3H4z" fill="#efb8a8" stroke="#8b4c3c"/><path d="M5 16.500h11" class="ln"/></svg></button>
      <button class="tool" aria-label="复制对象"><svg viewBox="0 0 18 18"><circle cx="5" cy="5" r="3.500" class="ob"/><circle cx="9" cy="12" r="3.500" class="ob"/><circle cx="14" cy="14" r="3" class="ob"/><path d="M9 3q5 0 5 6" fill="none" stroke="#24699f" stroke-width="2"/></svg></button>
      <button class="tool" aria-label="镜像"><svg viewBox="0 0 18 18"><path d="M7 3v12H2zM11 3v12h5z" class="ob"/><path d="M9 0v18" stroke="#1768ac"/></svg></button>
      <button class="tool" aria-label="偏移"><svg viewBox="0 0 18 18"><path d="M2 15h15v-4h-4V6q-1-5-6-3-3 1-2 6-4 1-3 6z" class="ob"/><path d="M5 12h9M8 11V7q2-3 3 0v4" fill="none" stroke="#1768ac" stroke-width="1.500"/></svg></button>
      <button class="tool" aria-label="阵列"><svg viewBox="0 0 18 18"><path d="M2 2h5v5H2zM11 2h5v5h-5zM2 11h5v5H2zM11 11h5v5h-5z" class="ob"/></svg></button>
      <button class="tool" aria-label="移动"><svg viewBox="0 0 18 18"><path d="M9 3v12M3 9h12" stroke="#37648f" stroke-width="2.500"/><path d="M9 0l4 5H5zM9 18l4-5H5zM0 9l5-4v8zM18 9l-5-4v8z" fill="#37648f"/></svg></button>
      <button class="tool" aria-label="旋转对象"><svg viewBox="0 0 18 18"><path d="M12 4q6 5 1 10-5 4-9 0-4-5 1-9" fill="none" stroke="#537a9d" stroke-width="3"/><path d="M2 2h8v7z" fill="#37648f"/></svg></button>
      <button class="tool" aria-label="缩放"><svg viewBox="0 0 18 18"><path d="M2 3h14v13H2z" fill="url(#pale)" stroke="#37648f"/><path d="M2 8h7v8H2z" fill="#fff" stroke="#111" stroke-dasharray="2 1"/></svg></button>
      <button class="tool" aria-label="拉伸对象"><svg viewBox="0 0 18 18"><path d="M2 3h8l6 13H2z" fill="url(#pale)" stroke="#37648f"/><path d="M2 3h4v13H2z" fill="#fff" stroke="#111" stroke-dasharray="2 1"/></svg></button>
      <button class="tool" aria-label="修剪"><svg viewBox="0 0 18 18"><path d="M1 9h6" class="ln"/><path d="M10 9h8" stroke="#1768ac" stroke-dasharray="3 1"/><path d="M7 14l6-11" class="ln"/></svg></button>
      <button class="tool" aria-label="延伸"><svg viewBox="0 0 18 18"><path d="M1 9h6" class="ln"/><path d="M8 9h5" stroke="#1768ac" stroke-dasharray="2 1"/><path d="M11 14l5-11" stroke="#1768ac" stroke-width="1.500"/></svg></button>
      <button class="tool" aria-label="打断于点"><svg viewBox="0 0 18 18"><path d="M2 4h14v11H2z" class="ob"/><path d="M9 2h3v3H9z" class="pt"/></svg></button>
      <button class="tool" aria-label="打断"><svg viewBox="0 0 18 18"><path d="M2 4h14v11H2z" class="ob"/><path d="M6 4h6" stroke="#fff" stroke-width="2"/><path d="M4 2h3v3H4zM11 2h3v3h-3z" class="pt"/></svg></button>
      <button class="tool" aria-label="倒角"><svg viewBox="0 0 18 18"><path d="M2 17V9l7-7h8" class="ln"/><path d="M2 9l7-7" stroke="#1768ac" stroke-width="1.600"/></svg></button>
      <button class="tool" aria-label="圆角"><svg viewBox="0 0 18 18"><path d="M2 17v-5M12 2h5" class="ln"/><path d="M2 12Q2 2 12 2" fill="none" stroke="#1768ac" stroke-width="1.800"/></svg></button>
      <button class="tool" aria-label="分解"><svg viewBox="0 0 18 18"><path d="M17 2l-7 7" class="ln"/><path d="M3 8l3 2 2-4 1 4 5-1-3 3 3 4-4-1-2 3-1-4-5 1 3-3z" fill="#f03a25" stroke="#f5c52b"/></svg></button>
    </div>
  </main>
</div>

<p class="stamp">shaonx 2010-1-3</p>
<svg class="brand" viewBox="0 0 124 100">
  <g stroke-width="1.500">
    <g fill="#78ad5b" stroke="#e6f2df"><circle cx="21" cy="27" r="6.500"/><path d="M4 34h34v5H28v32h-6V56h-3v15h-6V39H4z"/></g>
    <g fill="#6ba6cb" stroke="#245f91"><circle cx="57" cy="12" r="9.500" fill="#7fd6ea"/><path d="M32 21h50v7H68v43h-8V52h-6v19h-8V28H32z"/></g>
    <g fill="#efad65" stroke="#dc8c42" stroke-width="1"><circle cx="80" cy="39" r="5"/><path d="M71 44h18v4h-5v20h-3V58h-2v10h-3V48h-5z"/><circle cx="104" cy="32" r="5.500"/><path d="M92 37h25v5h-8v28h-4V54h-2v16h-4V42h-7z"/></g>
  </g>
  <text x="4" y="91">DISCUZ!</text>
</svg>
</body>
</html>
```
FILE: styles.css
```css
* { box-sizing: border-box; }

body {
  margin: 0;
  position: relative;
  font: 12px/16px "Liberation Sans", "Noto Sans CJK SC", sans-serif;
  color: #000;
}

button {
  margin: 0;
  padding: 0;
  border: 0;
  background: none;
  font: inherit;
  color: inherit;
}

svg { display: block; }
.defs { position: absolute; width: 0; height: 0; }
.mono { font-family: "Liberation Mono", monospace; font-size: 13px; }

.window {
  display: flex;
  flex-direction: column;
  height: 100vh;
  background: #ebe8e2;
  border: 1px solid #000;
  border-right: 3px solid #0c3fd0;
}

/* title and menus */
.titlebar {
  display: flex;
  align-items: center;
  flex: none;
  height: 21px;
  background: linear-gradient(#0a49cc, #1266ee 40%, #0b57e4 80%, #073cb4);
}
.app-logo { width: 16px; height: 16px; margin-right: 4px; }
.caption {
  flex: 1;
  margin: 0;
  font: bold 14px/20px "Noto Sans CJK SC", sans-serif;
  color: #fff;
  text-shadow: 1px 1px #0a2a80;
  white-space: nowrap;
}
.sys { display: flex; gap: 5px; padding-right: 2px; }
.sys button {
  width: 18px;
  height: 17px;
  border: 1px solid #dce8ff;
  border-radius: 3px;
  background: #2f6cf0;
}
.sys .close { background: #e0502c; }

.menubar { flex: none; height: 39px; border-bottom: 1px solid #fff; }
.menus { display: flex; align-items: flex-start; height: 20px; padding: 2px 0 0 2px; }
.doc-icon { flex: none; width: 17px; height: 16px; margin-right: 5px; }
.menus > button { flex: none; width: 54px; height: 18px; text-align: left; white-space: nowrap; }
.menus > .last { width: 44px; }
.key { margin-left: 1px; font: 10px "Liberation Mono", monospace; }
.doc-sys { display: flex; justify-content: flex-end; gap: 3px; }
.doc-sys.min { flex: 1; padding-right: 7px; }
.doc-sys button { width: 16px; height: 16px; background: #f6f4f0; border: 1px solid #fff; border-right-color: #ccc8be; border-bottom-color: #ccc8be; }

/* toolbars */
.row { display: flex; flex: none; height: 28px; border-bottom: 1px solid #b5b1a6; }
.row.second { height: 29px; }
.toolbar {
  display: flex;
  align-items: center;
  padding-right: 4px;
  border-top: 1px solid #fff;
  border-right: 1px solid #aaa69b;
}
.toolbar + .toolbar { margin-left: 3px; }
.toolbar.rest { flex: 1; min-width: 0; padding-right: 0; border-right: 0; }
.layers { flex: 20; }
.row .grip {
  flex: none;
  width: 6px;
  height: 24px;
  margin: 0 2px 0 3px;
  border: solid #fff;
  border-width: 0 2px;
  box-shadow: 1px 0 #b9b5aa;
}
.tool { display: grid; place-items: center; flex: none; width: 23px; height: 22px; }
.tool svg { width: 18px; height: 18px; }
.row .sep { flex: none; width: 1px; height: 20px; margin: 0 3px 0 2px; background: #aaa69b; }
.drop { width: 13px; color: #071f7c; font-size: 11px; }
.drop.off { color: #b0b8c4; }
.q { font: bold 14px "Liberation Sans", sans-serif; fill: #fff; }
.style-box {
  flex: 1;
  min-width: 0;
  height: 22px;
  padding: 0 4px;
  border: 1px solid #7c9cc2;
  background: #fefefc;
  font: 10px "Liberation Mono", monospace;
}
.combo { display: flex; align-items: center; height: 22px; padding: 1px; border: 1px solid #7c9cc2; background: #fefefc; }
.combo select {
  flex: 1;
  min-width: 0;
  height: 18px;
  padding: 0 3px;
  border: 0;
  appearance: none;
  background: none;
  color: #000;
  font: 12px/18px "Noto Sans CJK SC", sans-serif;
}
.chev { flex: none; width: 15px; height: 18px; border-radius: 2px; background: linear-gradient(#dce6fc, #b5c8f4); }
.scale { width: 101px; margin-left: 5px; }
.scale select { padding: 0 1px; font: 10px/18px "Liberation Mono", monospace; }
.layer { flex: 1; }
.states { flex: none; width: 80px; height: 18px; }

/* work area */
.work { display: flex; flex: 1; min-height: 0; }
.dock { flex: none; width: 24px; overflow: hidden; border-right: 1px solid #c4c0b6; border-left: 1px solid #fff; }
.dock .grip { display: block; height: 5px; margin: 3px 2px 2px; border: solid #fff; border-width: 2px 0; box-shadow: 0 1px #b9b5aa; }
.dock .tool { width: 22px; margin: 0 auto; }
.dock .sep { display: block; height: 2px; margin: 2px 1px; background: #aaa69b; border-bottom: 1px solid #fff; }
.dims { margin-left: -1px; }
.solids { width: 29px; border-right: 3px solid #aaa69b; }
.draw { width: 26px; margin-left: 3px; }
.modify { width: 25px; }
.ln { fill: none; stroke: #111; stroke-width: 1.3; }
.pt { fill: #1768ac; }
.ob { fill: url(#pale); stroke: #111; stroke-width: 1.3; }

.view { display: grid; grid-template: minmax(0, 1fr) 13px / minmax(0, 1fr) 17px; flex: 1; min-width: 0; }
.canvas { position: relative; overflow: hidden; background: #a5a9a6; }
.sheet { width: 513px; height: 348px; }
.line { fill: none; stroke: #111; }
.zone { font: 10px "Liberation Mono", monospace; text-anchor: middle; }

.title-block {
  position: absolute;
  left: 18px;
  top: 100px;
  display: flex;
  border: solid #111;
  border-width: 1px 0 0 1px;
  font: 11px/15px "Noto Sans CJK SC", sans-serif;
}
.title-block b {
  display: flex;
  align-items: center;
  justify-content: center;
  min-height: 16px;
  border: solid #111;
  border-width: 0 1px 1px 0;
  font-weight: 400;
  white-space: nowrap;
}
.cells { display: grid; grid-auto-rows: 16px; }
.c5 { grid-template-columns: 26px 27px 46px 26px 35px; }
.c4 { grid-template-columns: repeat(4, 40px); }
.cad { font-family: "Liberation Mono", monospace; font-size: 10px; }
.names { display: grid; grid-template: 32px 64px 32px / 160px; }
.number { display: grid; grid-template: 48px 16px 16px 16px 32px / 161px; }
.heads { grid-template-columns: 81px 26px 27px 27px; }
.c6 { grid-template-columns: 27px 27px 27px 26px 27px 27px; }
.pages { grid-template-columns: 81px 80px; }
.title-block .pages b { justify-content: space-between; padding: 0 10px 0 14px; }
.title-block .note { align-items: flex-start; justify-content: flex-start; padding-left: 3px; font-size: 8px; color: #888; }
.title-block .company { font-size: 12px; font-weight: 900; }

.ring { position: absolute; left: 7px; top: 91px; width: 503px; height: 146px; border: 3px solid #f00; border-radius: 25px; }
.arrow { position: absolute; left: 178px; top: 34px; width: 30px; height: 62px; }
.callout { position: absolute; left: 97px; top: 10px; margin: 0; font: bold 20px/26px "Noto Sans CJK SC", sans-serif; color: #f00; white-space: nowrap; }

.vscroll { display: flex; flex-direction: column; padding: 1px; background: #f8f6f2; }
.vscroll button { height: 17px; border-radius: 2px; background: linear-gradient(90deg, #dce6fc, #b5c8f4); }
.vtrack { display: flex; flex: 1; align-items: flex-end; }
.vthumb { width: 15px; height: 16px; border-radius: 2px; background: #c3d2f7; }

.foot { grid-column: 1 / -1; display: flex; align-items: stretch; border-top: 1px solid #000; overflow: hidden; }
.nav { flex: none; width: 19px; border-right: 1px solid #aaa69b; background: #f2efea; }
.nav svg { width: 18px; height: 12px; }
.tab { position: relative; flex: none; width: 37px; padding: 0 0 0 8px; text-align: left; line-height: 12px; white-space: nowrap; }
.tab::after { content: ""; position: absolute; right: -1px; top: 0; height: 14px; border-left: 2px solid #111; transform: skewX(-18deg); }
.tab.wide { width: 45px; }
.tab.on { width: 48px; background: #fefefc; font-weight: bold; }
.hscroll { display: flex; width: 170px; margin-left: auto; margin-right: 17px; }
.hscroll button { width: 14px; background: linear-gradient(#dce6fc, #b5c8f4); }
.htrack { display: flex; flex: 1; justify-content: flex-end; background: #f8f6f2; }
.hthumb { width: 14px; margin-right: 2px; background: repeating-linear-gradient(90deg, #c3d2f7 0 2px, #93aad8 2px 3px); }

/* marks laid over the whole window */
.stamp { position: absolute; right: 13px; top: 4px; margin: 0; font: bold 15px/20px "Liberation Mono", monospace; color: #f00; }
.brand { position: absolute; right: 2px; bottom: 2px; width: 124px; height: 100px; opacity: .72; pointer-events: none; }
.brand text { font: italic bold 28px "Liberation Sans", sans-serif; fill: #4f81b4; stroke: #21578f; stroke-width: 1; }
```
